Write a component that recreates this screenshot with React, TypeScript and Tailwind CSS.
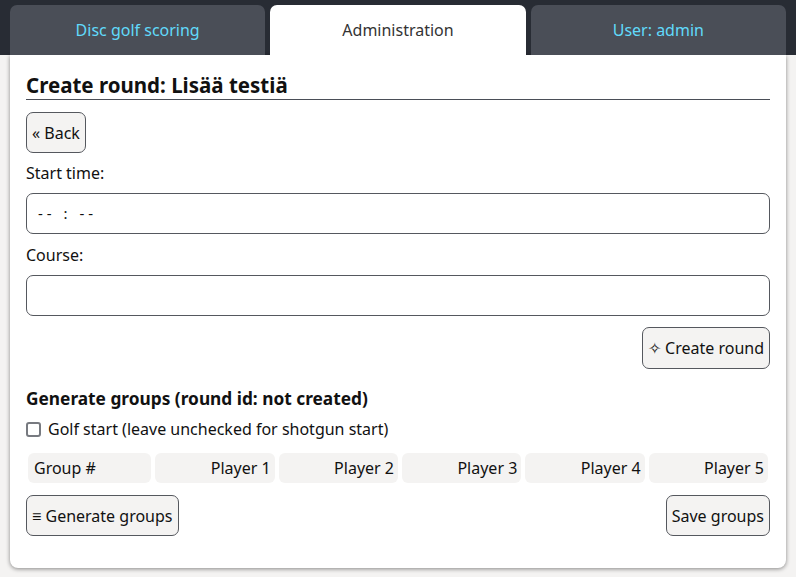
import React from "react";

const font = { fontFamily: '"Noto Sans", "Open Sans", sans-serif' };

function Btn({ children, className = "" }: { children: React.ReactNode; className?: string }) {
  return (
    <button
      className={
        "h-[41px] px-[5px] rounded-[7px] border border-[#55585e] bg-[#f4f3f2] text-[16px] text-[#111] leading-none " +
        className
      }
    >
      {children}
    </button>
  );
}

export default function App() {
  const players = ["Player 1", "Player 2", "Player 3", "Player 4", "Player 5"];
  return (
    <div className="min-h-screen bg-[#f4f3f2] text-[#111]" style={font}>
      <div className="h-[55px] bg-[#282c34] flex gap-[5px] px-[10px] pt-[5px]">
        <div className="flex-1 rounded-t-[7px] bg-[#4a4e57] text-[#61dafb] text-[16px] flex items-center justify-center">
          Disc golf scoring
        </div>
        <div className="flex-1 rounded-t-[7px] bg-white text-[#333] text-[16px] flex items-center justify-center">
          Administration
        </div>
        <div className="flex-1 rounded-t-[7px] bg-[#4a4e57] text-[#61dafb] text-[16px] flex items-center justify-center">
          User: admin
        </div>
      </div>
      <div className="mx-[10px] bg-white rounded-b-[8px] shadow-[0_1px_4px_rgba(0,0,0,0.45)] px-4 pt-[16px] pb-[32px]">
        <h1 className="text-[20.5px] font-bold leading-[28px] border-b border-[#4a4e57]">
          Create round: Lisää testiä
        </h1>
        <div className="mt-[12px]">
          <Btn>« Back</Btn>
        </div>
        <div className="mt-[8px] text-[16px] leading-[24px]">Start time:</div>
        <div className="mt-[8px] h-[41px] rounded-[7px] border border-[#55585e] flex items-center px-[11px] text-[15px] tracking-[4px]">
          -- : --
        </div>
        <div className="mt-[9px] text-[16px] leading-[24px]">Course:</div>
        <div className="mt-[8px] h-[41px] rounded-[7px] border border-[#55585e]" />
        <div className="mt-[11px] flex justify-end">
          <Btn className="h-[42px]">✧ Create round</Btn>
        </div>
        <h2 className="mt-[18px] text-[17.3px] font-bold leading-[24px]">
          Generate groups (round id: not created)
        </h2>
        <label className="mt-[6px] flex items-center gap-[7px] text-[16px] leading-[24px]">
          <span className="w-[15px] h-[15px] rounded-[3px] border-2 border-[#777a80] bg-white" />
          Golf start (leave unchecked for shotgun start)
        </label>
        <div className="mt-[12px] flex gap-[4px] px-[2px]">
          <div className="flex-1 h-[30px] rounded-[6px] bg-[#f4f3f2] flex items-center px-[6px] text-[16px]">
            Group #
          </div>
          {players.map((p) => (
            <div
              key={p}
              className="flex-1 h-[30px] rounded-[6px] bg-[#f4f3f2] flex items-center justify-end px-[4px] text-[16px]"
            >
              {p}
            </div>
          ))}
        </div>
        <div className="mt-[12px] flex justify-between">
          <Btn>≡ Generate groups</Btn>
          <Btn>Save groups</Btn>
        </div>
      </div>
    </div>
  );
}
